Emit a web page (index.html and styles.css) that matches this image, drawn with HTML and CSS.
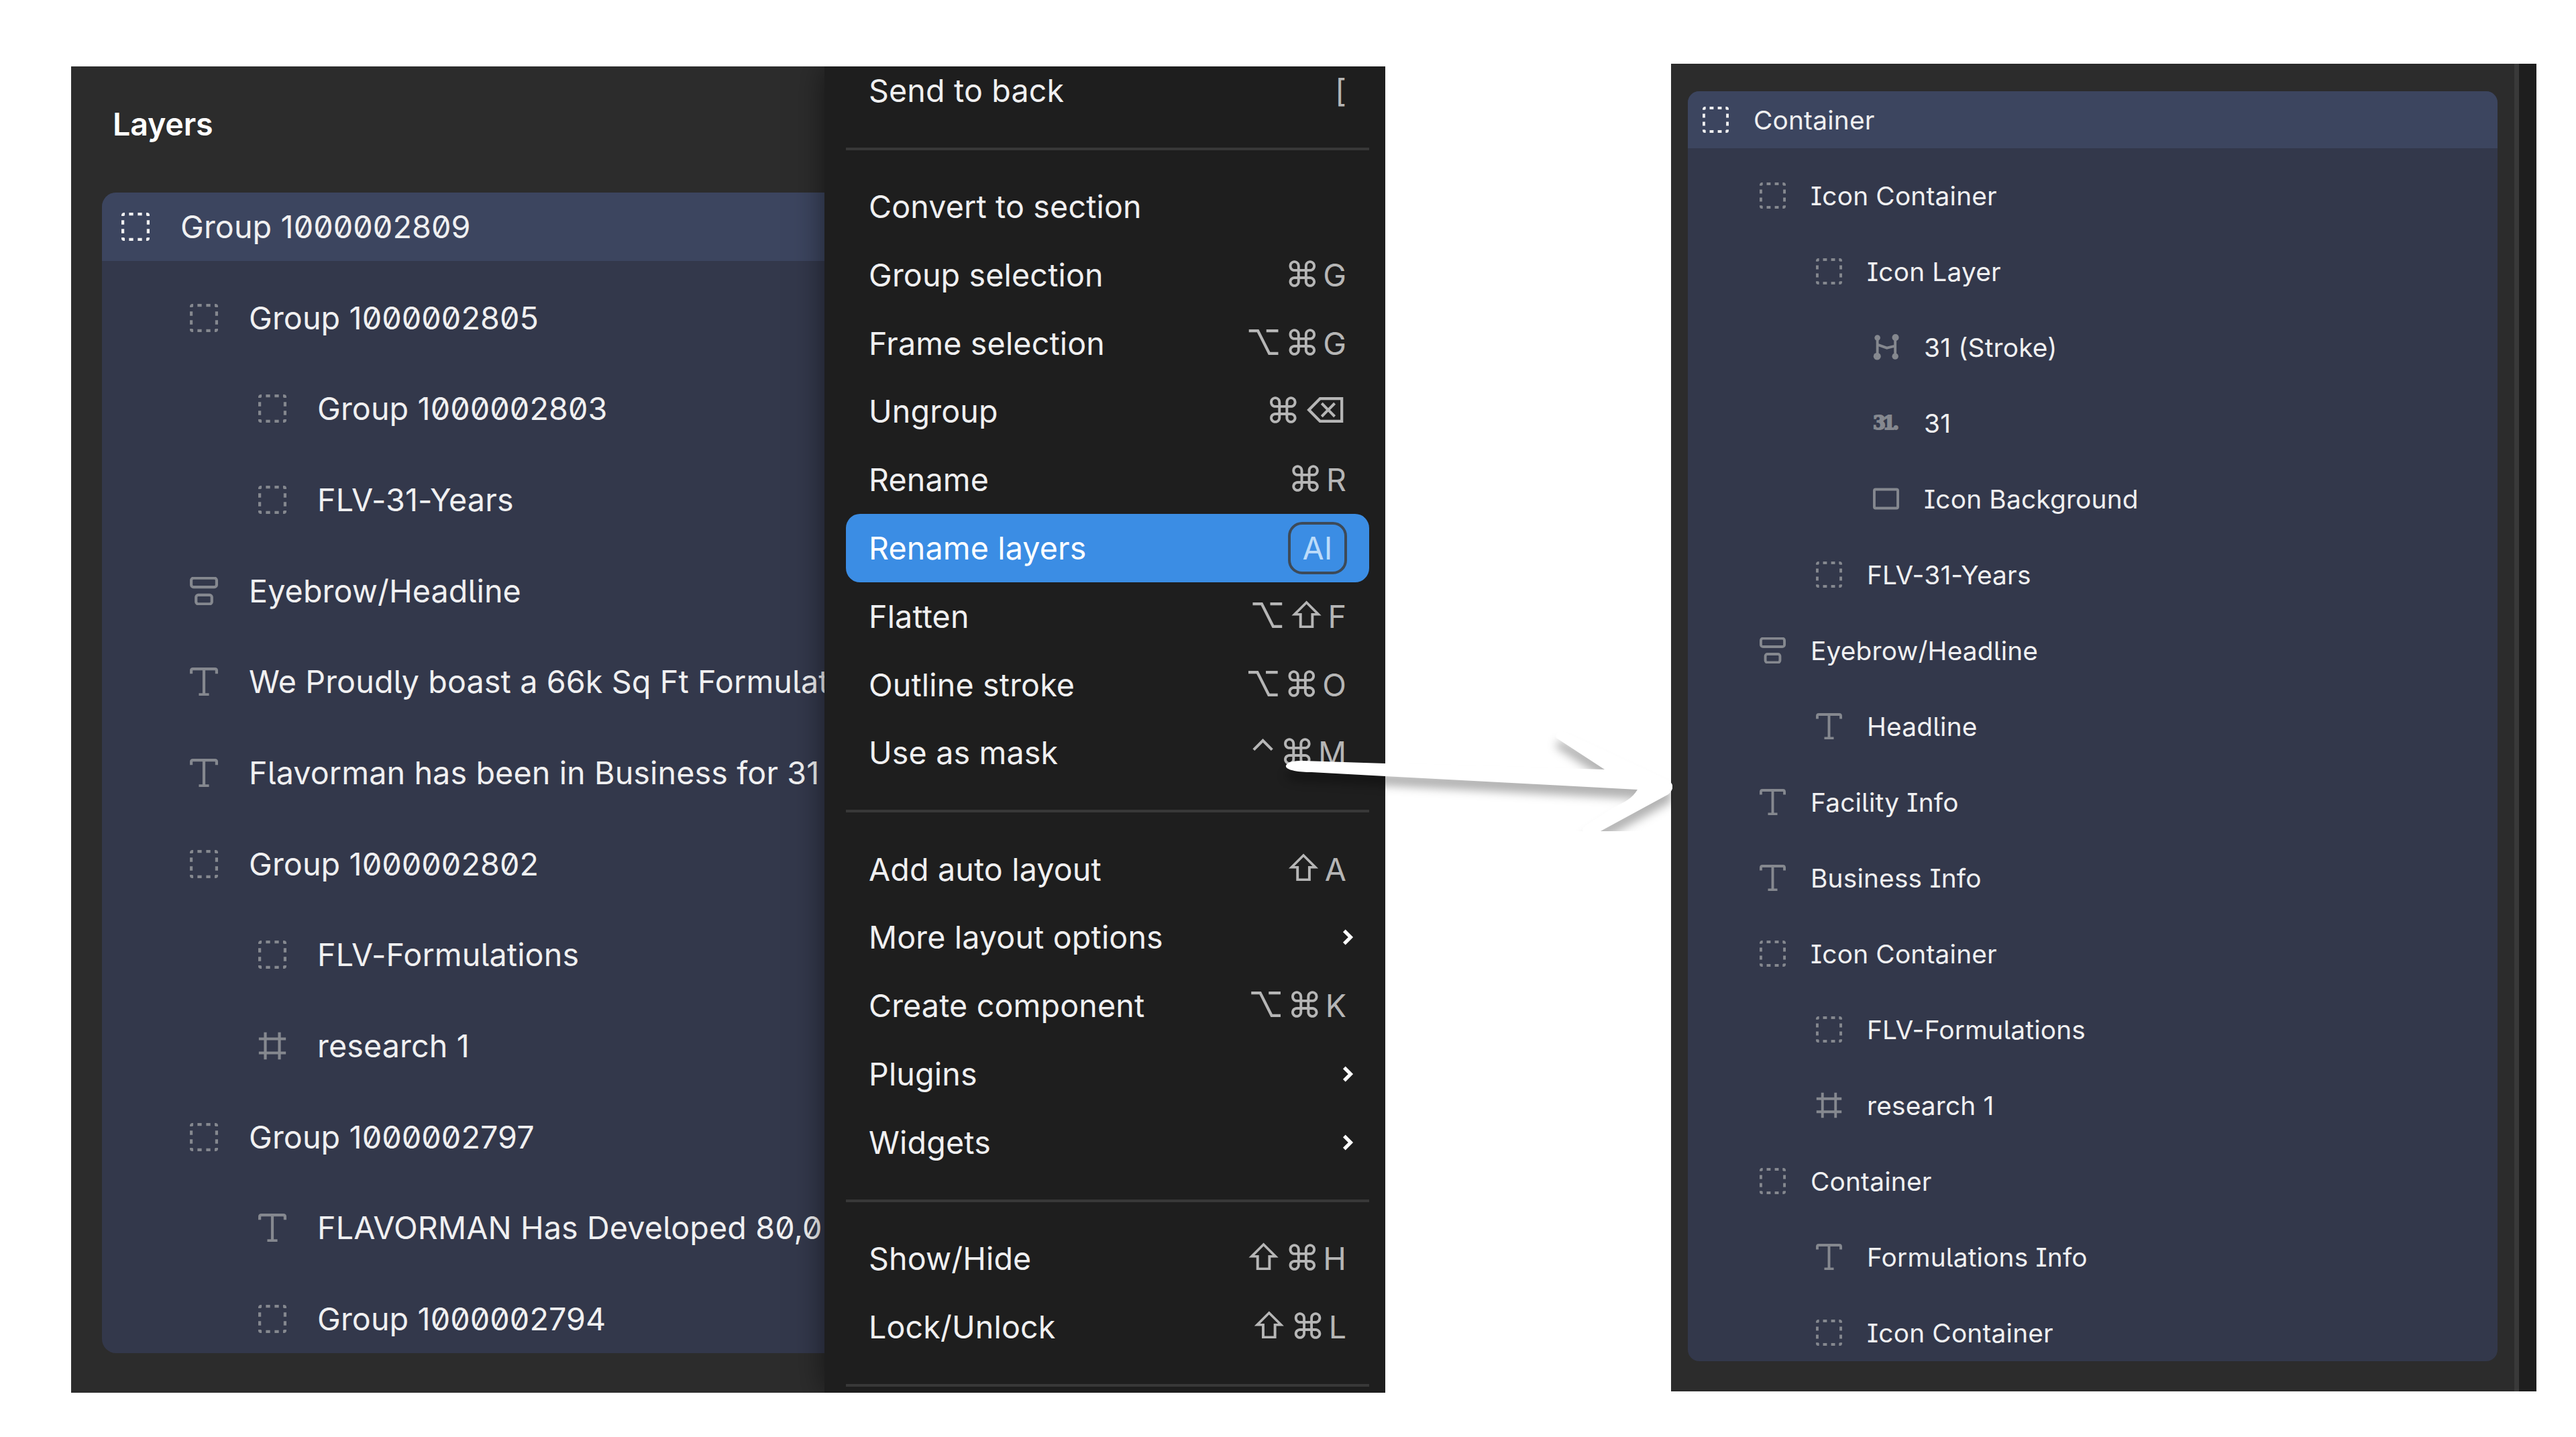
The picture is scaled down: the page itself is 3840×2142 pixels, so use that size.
FILE: index.html
```html
<!DOCTYPE html>
<html lang="en">
<head>
    <meta charset="UTF-8">
    <meta name="viewport" content="width=device-width, initial-scale=1.0">
    <title>Rename layers</title>
    <link rel="stylesheet" href="styles.css">
</head>
<body>
    <!-- icon shapes -->
    <svg class="sprite">
        <symbol id="group" viewBox="0 0 10 10">
            <path d="M.5 1.2V.9a.4.4 0 0 1 .4-.4h.3M2.7.5h1.5M5.8.5h1.5M8.8.5h.3a.4.4 0 0 1 .4.4v.3M9.5 2.7v1.5M9.5 5.8v1.5M9.5 8.8v.3a.4.4 0 0 1-.4.4h-.3M7.3 9.5H5.8M4.2 9.5H2.7M1.2 9.5H.9a.4.4 0 0 1-.4-.4v-.3M.5 7.3V5.8M.5 4.2V2.7"/>
        </symbol>
        <symbol id="stack" viewBox="0 0 10 10">
            <rect x=".5" y=".4" width="9" height="3.2" rx=".8"/>
            <rect x="2.2" y="6.4" width="5.6" height="3.2" rx=".8"/>
        </symbol>
        <symbol id="text" viewBox="0 0 10 10">
            <path d="M.5 2.2V1.1C.5.7.7.5 1.1.5h7.8c.4 0 .6.2.6.6v1.1M5 .5v9.1M3.2 9.6h3.6"/>
        </symbol>
        <symbol id="frame" viewBox="0 0 10 10">
            <path d="M2.5.2v9.6M7.5.2v9.6M.2 2.5h9.6M.2 7.5h9.6"/>
        </symbol>
        <symbol id="vector" viewBox="0 0 10 10">
            <path d="M1.7 1.4v7.2M8.5 1.4v7.2M1.7 4l3.6 1.3 3.2-.8"/>
            <g class="dots"><circle cx="1.7" cy="1.4" r="1.1"/><circle cx="8.6" cy="1.3" r="1.3"/><circle cx="1.6" cy="8.5" r="1.4"/><circle cx="8.5" cy="8.5" r="1.2"/></g>
        </symbol>
        <symbol id="rect" viewBox="0 0 10 10">
            <rect x=".5" y="1.4" width="9" height="7.2" rx=".5"/>
        </symbol>
        <symbol id="chevron" viewBox="0 0 10 10">
            <path d="M4.2 2.6L6.6 5 4.2 7.4"/>
        </symbol>
    </svg>

    <div class="panel before">
        <div class="layers">
            <h2>Layers</h2>
            <ul class="tree">
                <li class="selected"><svg><use href="#group"/></svg>Group 1000002809</li>
                <li class="l1"><svg><use href="#group"/></svg>Group 1000002805</li>
                <li class="l2"><svg><use href="#group"/></svg>Group 1000002803</li>
                <li class="l2"><svg><use href="#group"/></svg>FLV-31-Years</li>
                <li class="l1"><svg><use href="#stack"/></svg>Eyebrow/Headline</li>
                <li class="l1"><svg><use href="#text"/></svg>We Proudly boast a 66k Sq Ft Formulat</li>
                <li class="l1"><svg><use href="#text"/></svg>Flavorman has been in Business for 31</li>
                <li class="l1"><svg><use href="#group"/></svg>Group 1000002802</li>
                <li class="l2"><svg><use href="#group"/></svg>FLV-Formulations</li>
                <li class="l2"><svg><use href="#frame"/></svg>research 1</li>
                <li class="l1"><svg><use href="#group"/></svg>Group 1000002797</li>
                <li class="l2"><svg><use href="#text"/></svg>FLAVORMAN Has Developed 80,0</li>
                <li class="l2"><svg><use href="#group"/></svg>Group 1000002794</li>
            </ul>
        </div>
        <div class="menu">
            <div class="item">Send to back <kbd>[</kbd></div>
            <hr>
            <div class="item">Convert to section</div>
            <div class="item">Group selection <kbd><i>⌘</i>G</kbd></div>
            <div class="item">Frame selection <kbd><i>⌥⌘</i>G</kbd></div>
            <div class="item">Ungroup <kbd><i>⌘⌫</i></kbd></div>
            <div class="item">Rename <kbd><i>⌘</i>R</kbd></div>
            <div class="item active">Rename layers <span class="badge">AI</span></div>
            <div class="item">Flatten <kbd><i>⌥⇧</i>F</kbd></div>
            <div class="item">Outline stroke <kbd><i>⌥⌘</i>O</kbd></div>
            <div class="item">Use as mask <kbd><i>⌃⌘</i>M</kbd></div>
            <hr>
            <div class="item">Add auto layout <kbd><i>⇧</i>A</kbd></div>
            <div class="item">More layout options <svg><use href="#chevron"/></svg></div>
            <div class="item">Create component <kbd><i>⌥⌘</i>K</kbd></div>
            <div class="item">Plugins <svg><use href="#chevron"/></svg></div>
            <div class="item">Widgets <svg><use href="#chevron"/></svg></div>
            <hr>
            <div class="item">Show/Hide <kbd><i>⇧⌘</i>H</kbd></div>
            <div class="item">Lock/Unlock <kbd><i>⇧⌘</i>L</kbd></div>
            <hr>
        </div>
    </div>

    <div class="panel after">
        <ul class="tree">
            <li class="selected"><svg><use href="#group"/></svg>Container</li>
            <li class="l1"><svg><use href="#group"/></svg>Icon Container</li>
            <li class="l2"><svg><use href="#group"/></svg>Icon Layer</li>
            <li class="l3"><svg><use href="#vector"/></svg>31 (Stroke)</li>
            <li class="l3"><span class="thumb">31.</span>31</li>
            <li class="l3"><svg><use href="#rect"/></svg>Icon Background</li>
            <li class="l2"><svg><use href="#group"/></svg>FLV-31-Years</li>
            <li class="l1"><svg><use href="#stack"/></svg>Eyebrow/Headline</li>
            <li class="l2"><svg><use href="#text"/></svg>Headline</li>
            <li class="l1"><svg><use href="#text"/></svg>Facility Info</li>
            <li class="l1"><svg><use href="#text"/></svg>Business Info</li>
            <li class="l1"><svg><use href="#group"/></svg>Icon Container</li>
            <li class="l2"><svg><use href="#group"/></svg>FLV-Formulations</li>
            <li class="l2"><svg><use href="#frame"/></svg>research 1</li>
            <li class="l1"><svg><use href="#group"/></svg>Container</li>
            <li class="l2"><svg><use href="#text"/></svg>Formulations Info</li>
            <li class="l2"><svg><use href="#group"/></svg>Icon Container</li>
        </ul>
        <div class="canvas-edge"></div>
    </div>

    <!-- arrow from the menu to the renamed layers -->
    <svg class="arrow" viewBox="1900 1080 593 159">
        <path d="M1917 1141c3-6 12-7 25-7l123 4 327 9-72-47c-2-8 4-12 14-8l150 70c12 5 12 14 3 22l-105 57c-12 6-30 0-20-9l43-28c18-9 28-14 36-27l-376-20-110-6c-18 0-40-3-38-10z"/>
    </svg>
</body>
</html>
```
FILE: styles.css
```css
* {
    box-sizing: border-box;
}
body {
    margin: 0;
    height: 2142px;
    padding: 95px 59px 0 106px;
    display: flex;
    justify-content: space-between;
    align-items: flex-start;
    position: relative;
    overflow: hidden;
    background-color: #fff;
    color: #f0f0f1;
    font-family: Inter, "Liberation Sans", sans-serif;
}
svg {
    fill: none;
    stroke: currentColor;
}
.sprite {
    display: none;
}
.dots {
    fill: currentColor;
    stroke: none;
}
.panel {
    display: flex;
    overflow: hidden;
    background-color: #2c2c2c;
}

/* layer tree */
.tree {
    list-style: none;
    margin: 0;
    padding: 0;
    display: flex;
    flex-direction: column;
    background-color: #33384b;
    font-feature-settings: "ss02";
}
.tree li {
    display: flex;
    align-items: center;
    white-space: nowrap;
    flex-shrink: 0;
}
.tree svg, .thumb {
    flex-shrink: 0;
    overflow: visible;
    color: #85888f;
}
.tree .selected {
    background-color: #3c455f;
}
.tree .selected svg {
    color: #f0f0f1;
}

/* left panel */
.before {
    width: 1959px;
    height: 1977px;
    margin-top: 4px;
    font-size: 46.6px;
    letter-spacing: 0.15px;
}
.layers {
    width: 1123px;
    flex-shrink: 0;
    overflow: hidden;
    padding-left: 46px;
}
h2 {
    margin: 0;
    height: 188px;
    padding: 56px 0 0 16px;
    font-size: 46.6px;
    line-height: 60px;
    font-weight: 600;
    letter-spacing: -0.2px;
    color: #fff;
}
.before .tree {
    gap: 33.9px;
    border-radius: 21px 0 0 21px;
    overflow: hidden;
}
.before .tree li {
    height: 101.8px;
    padding-left: 29px;
    gap: 46px;
}
.before .tree svg {
    width: 42px;
    height: 42px;
}
.before .tree li.l1 { padding-left: 131px; }
.before .tree li.l2 { padding-left: 233px; }

/* context menu */
.menu {
    flex: 1;
    position: relative;
    padding: 0 24px 0 32px;
    background-color: #1e1e1e;
    box-shadow: 0 0 44px rgba(0, 0, 0, 0.5);
}
.item {
    height: 101.8px;
    padding: 0 34px;
    display: flex;
    align-items: center;
    justify-content: space-between;
    white-space: nowrap;
}
.item:first-child {
    margin-top: -15px;
}
.menu hr {
    height: 4px;
    margin: 34px 0 33.4px;
    border: none;
    background-color: #383838;
}
.item kbd {
    font-family: inherit;
    letter-spacing: 5px;
    margin-right: -5px;
    color: #b6b6b6;
}
.item kbd i {
    font-style: normal;
    font-size: 52px;
    line-height: 1;
}
.item svg {
    width: 40px;
    height: 40px;
    margin-right: -20px;
    stroke-width: 1.3;
    color: #fff;
}
.item.active {
    border-radius: 21px;
    background-color: #3b8de4;
    color: #fff;
}
.badge {
    width: 88px;
    height: 78px;
    margin-right: -1px;
    display: flex;
    align-items: center;
    justify-content: center;
    border: 4px solid #3d4a58;
    border-radius: 21px;
    color: #bcdcfa;
}

/* right panel */
.after {
    width: 1290px;
    height: 1979px;
    padding: 41px 0 0 25px;
    justify-content: space-between;
    align-items: flex-start;
    font-size: 38.8px;
    letter-spacing: 0.2px;
}
.after .tree {
    width: 1207px;
    gap: 28.2px;
    border-radius: 17px;
    overflow: hidden;
}
.after .tree li {
    height: 84.8px;
    padding-left: 22px;
    gap: 37px;
}
.after .tree svg {
    width: 39px;
    height: 39px;
}
.after .tree li.l1 { padding-left: 107px; }
.after .tree li.l2 { padding-left: 191px; }
.after .tree li.l3 { padding-left: 276px; }
.thumb {
    width: 39px;
    font: 700 27px "DejaVu Serif", serif;
    letter-spacing: -4px;
    -webkit-text-stroke: 2px currentColor;
}
.canvas-edge {
    width: 33px;
    height: 1979px;
    margin-top: -41px;
    border-left: 7px solid #393939;
    background-color: #1e1e1e;
}

.arrow {
    position: absolute;
    left: 1900px;
    top: 1080px;
    width: 593px;
    height: 159px;
    overflow: hidden;
}
.arrow path {
    fill: #fff;
    stroke: none;
    filter: drop-shadow(0 14px 7px rgba(0, 0, 0, 0.3));
}
```
